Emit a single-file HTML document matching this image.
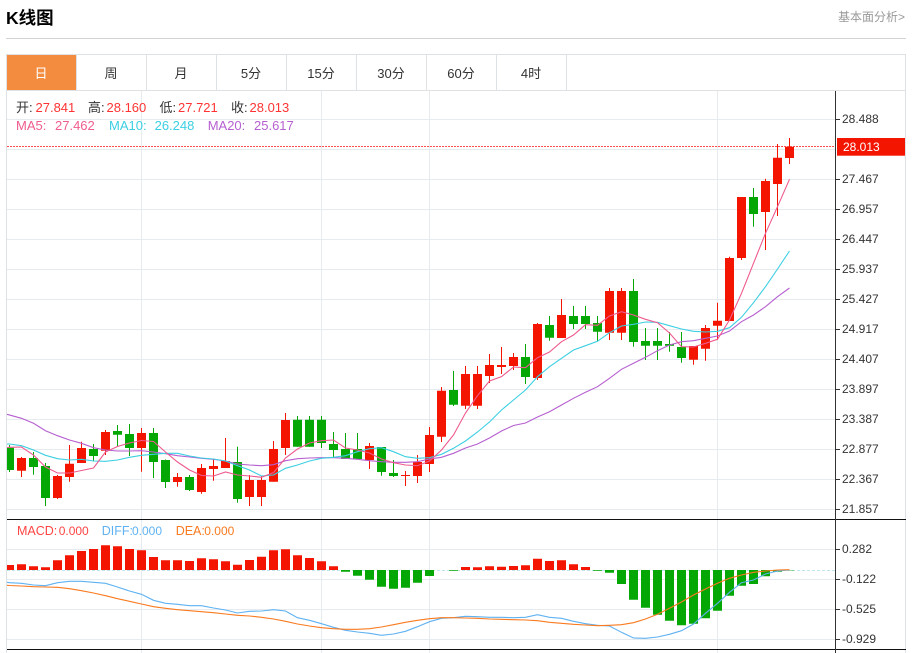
<!DOCTYPE html>
<html><head><meta charset="utf-8"><title>K线图</title>
<style>
html,body{margin:0;padding:0;background:#fff;overflow:hidden}
svg{display:block}
text{font-family:"Liberation Sans","Noto Sans CJK SC",sans-serif}
</style></head><body>
<svg xmlns="http://www.w3.org/2000/svg" width="913" height="653" viewBox="0 0 913 653">
<rect width="913" height="653" fill="#fff"/>
<text x="6" y="24" font-size="17.5" font-weight="700" fill="#000">K线图</text>
<text x="838" y="21" font-size="12" fill="#999">基本面分析&gt;</text>
<path d="M6 38.5H906" stroke="#d2d2d2" fill="none"/>
<!-- tabs -->
<rect x="7" y="55" width="69.5" height="35" fill="#f48c40"/>
<path d="M6 54.5H906M6 90.5H906M6.5 54V653M76.5 55V90M146.5 55V90M216.5 55V90M286.5 55V90M356.5 55V90M426.5 55V90M496.5 55V90M566.5 55V90M905.5 54V653" stroke="#dfe2e4" fill="none"/>
<g font-size="13" fill="#333" text-anchor="middle">
<text x="41" y="78" fill="#fff">日</text><text x="111" y="78">周</text><text x="181" y="78">月</text><text x="251" y="78">5分</text><text x="321" y="78">15分</text><text x="391" y="78">30分</text><text x="461" y="78">60分</text><text x="531" y="78">4时</text>
</g>
<!-- grid -->
<path d="M7 119.5H835M7 149.5H835M7 179.5H835M7 209.5H835M7 239.5H835M7 269.5H835M7 299.5H835M7 329.5H835M7 359.5H835M7 389.5H835M7 419.5H835M7 449.5H835M7 479.5H835M7 509.5H835M7 549.5H835M7 579.5H835M7 609.5H835M7 639.5H835M141.5 91V653M321.5 91V653M429.5 91V653M717.5 91V653" stroke="#e6ebf0" fill="none"/>
<!-- candles wicks -->
<path fill="none" stroke="#f41500" d="M21.5 457V477M57.5 475V499M69.5 445V481.7M81.5 441.7V463M105.5 430V455M141.5 428V471.7M177.5 473V486.7M201.5 464V493.7M213.5 459V480.7M225.5 438V468M249.5 475V506M261.5 476V506M273.5 441V481.7M285.5 413V455M369.5 443V469M405.5 471V486M417.5 455V483M429.5 427V472M441.5 387V442M465.5 366V409M477.5 366V409M489.5 354V383M501.5 347V374M513.5 353V370M537.5 323V380M561.5 299V338M609.5 288V340M621.5 288V340M693.5 346V364.7M705.5 325V360.7M717.5 302.7V340M729.5 256.7V321M741.5 197V260M765.5 178.7V250M777.5 144V216M789.5 138V164"/>
<path fill="none" stroke="#05a705" d="M9.5 445V472M33.5 452V474.7M45.5 463V506M93.5 444V461M117.5 425V446M129.5 424V456M153.5 428V478M165.5 459.5V488M189.5 475V491M237.5 446.7V502.7M297.5 416V446.7M309.5 416V446.7M321.5 416V448M333.5 432V457M345.5 433V459M357.5 433V459M381.5 447V475.7M393.5 460V477M453.5 371V406M525.5 344V384M549.5 316V340.7M573.5 306V329M585.5 306V329M597.5 316V341M633.5 279V346.7M645.5 328V360M657.5 328V360M669.5 332V351.7M681.5 332V362.7M753.5 188V226.7"/>
<!-- candle bodies -->
<path fill="#f41500" d="M17 458h9V470.7h-9zM53 476h9V498h-9zM65 463.7h9V477h-9zM77 448h9V463h-9zM101 432h9V450.7h-9zM137 433h9V448h-9zM173 477h9V482h-9zM197 468h9V492h-9zM209 466h9V469h-9zM221 461h9V468h-9zM245 480h9V497h-9zM257 480h9V497h-9zM269 449h9V481.7h-9zM281 420h9V448h-9zM365 446h9V460h-9zM401 475h9V476h-9zM413 462h9V476h-9zM425 435h9V464h-9zM437 390.7h9V436.7h-9zM461 374h9V405.7h-9zM473 374h9V405.7h-9zM485 365h9V376h-9zM497 365h9V367h-9zM509 357h9V366h-9zM533 324h9V378h-9zM557 315h9V338h-9zM605 291h9V332.7h-9zM617 291h9V332.7h-9zM689 346h9V359.7h-9zM701 328h9V348.7h-9zM713 320.7h9V325.7h-9zM725 258h9V321h-9zM737 197h9V258h-9zM761 181h9V212h-9zM773 157.7h9V184h-9zM785 146.7h9V158h-9z"/>
<path fill="#05a705" d="M7 447.7h7V470h-7zM29 458h9V467h-9zM41 466h9V498h-9zM89 449h9V456h-9zM113 431h9V434.7h-9zM125 434h9V448h-9zM149 433h9V462h-9zM161 460h9V482h-9zM185 477h9V490h-9zM233 462h9V499h-9zM293 419.7h9V446.7h-9zM305 419.7h9V446.7h-9zM317 419.7h9V443h-9zM329 444h9V450h-9zM341 449h9V459h-9zM353 449h9V459h-9zM377 447h9V472h-9zM389 473h9V476h-9zM449 390h9V404.7h-9zM521 357h9V377h-9zM545 325h9V337.7h-9zM569 316h9V324h-9zM581 316h9V324h-9zM593 323h9V331.7h-9zM629 291h9V342h-9zM641 341h9V345.7h-9zM653 341h9V345.7h-9zM665 344h9V345.7h-9zM677 347h9V358h-9zM749 197h9V214h-9z"/>
<!-- MA lines -->
<polyline fill="none" stroke="#b65fd0" stroke-width="1.1" points="7,414.3 21.5,418.3 33.5,423.3 45.5,430.7 57.5,435.7 69.5,440 81.5,443.3 93.5,447.7 105.5,450 117.5,451 129.5,451 141.5,450.7 153.5,452 165.5,453.7 177.5,455.7 189.5,457 201.5,458.3 213.5,459.3 225.5,461 237.5,464 249.5,465 261.5,465.7 273.5,464.7 285.5,460.7 297.5,458.7 309.5,458 321.5,457.7 333.5,457.7 345.5,458.3 357.5,459.3 369.5,460.7 381.5,461.7 393.5,462.3 405.5,462.3 417.5,461.7 429.5,459 441.5,457.3 453.5,453.3 465.5,448 477.5,444 489.5,438 501.5,431 513.5,425.5 525.5,423 537.5,417 549.5,411.7 561.5,405 573.5,398.3 585.5,392.3 597.5,386.7 609.5,378.3 621.5,369.3 633.5,363.3 645.5,357.3 657.5,350.7 669.5,345 681.5,341.7 693.5,340.7 705.5,338.3 717.5,336 729.5,331 741.5,321.7 753.5,315 765.5,306.7 777.5,296.7 789.5,288"/>
<polyline fill="none" stroke="#3ccfe2" stroke-width="1.1" points="7,444 9.5,444 21.5,445.7 33.5,450 45.5,455.3 57.5,458.7 69.5,460 81.5,459.3 93.5,461 105.5,461.3 117.5,460 129.5,457.3 141.5,455.3 153.5,454.3 165.5,453.3 177.5,453.3 189.5,456 201.5,458 213.5,459 225.5,461 237.5,465.7 249.5,470 261.5,476 273.5,475 285.5,468.3 297.5,465 309.5,461 321.5,458.3 333.5,457.3 345.5,455.7 357.5,451.7 369.5,448.7 381.5,447.7 393.5,451.7 405.5,456.7 417.5,458.3 429.5,457.7 441.5,454.3 453.5,448.3 465.5,441 477.5,432 489.5,422 501.5,410 513.5,400 525.5,390 537.5,376.7 549.5,366.7 561.5,358.3 573.5,350 585.5,345.7 597.5,341.3 609.5,332.7 621.5,326 633.5,324.3 645.5,322 657.5,322.3 669.5,325.7 681.5,329 693.5,331.3 705.5,332 717.5,331.3 729.5,327.7 741.5,317.3 753.5,302.7 765.5,286.7 777.5,269 789.5,251"/>
<polyline fill="none" stroke="#ee5a8e" stroke-width="1.1" points="7,447.5 9.5,447.3 21.5,447 33.5,455 45.5,467 57.5,473 69.5,473 81.5,470.5 93.5,468 105.5,452 117.5,446.5 129.5,443 141.5,440.5 153.5,441.5 165.5,452 177.5,462 189.5,470 201.5,475.5 213.5,476 225.5,472 237.5,475 249.5,476 261.5,477.3 273.5,472.7 285.5,458 297.5,449 309.5,443 321.5,440.7 333.5,440 345.5,448 357.5,450 369.5,453 381.5,459 393.5,462.7 405.5,465 417.5,465.7 429.5,461 441.5,450 453.5,435 465.5,413 477.5,395.7 489.5,381 501.5,376.7 513.5,367 525.5,367.7 537.5,357.7 549.5,352 561.5,341.7 573.5,335 585.5,324.7 597.5,325.3 609.5,316 621.5,311.7 633.5,315 645.5,319.3 657.5,322.7 669.5,333 681.5,346.7 693.5,347 705.5,343.3 717.5,339.3 729.5,320 741.5,293.3 753.5,263.3 765.5,233.3 777.5,206.7 789.5,179.3"/>
<!-- last price -->
<path d="M7 146.5H835" stroke="#ff4d4d" stroke-dasharray="2 1" fill="none"/>
<rect x="837" y="138" width="68" height="17.7" fill="#f41500"/>
<text x="843" y="151" font-size="12" fill="#fff">28.013</text>
<!-- MACD zero line -->
<path d="M7 570.5H835" stroke="#bfe6ee" stroke-dasharray="3 2" fill="none"/>
<!-- MACD bars -->
<path fill="#f41500" d="M7 565h7V570h-7zM17 564.3h9V570h-9zM29 566.3h9V570h-9zM41 567.3h9V570h-9zM53 560.3h9V570h-9zM65 555.3h9V570h-9zM77 551h9V570h-9zM89 549h9V570h-9zM101 545.3h9V570h-9zM113 546.3h9V570h-9zM125 549h9V570h-9zM137 550.3h9V570h-9zM149 557h9V570h-9zM161 560.3h9V570h-9zM173 560.3h9V570h-9zM185 561h9V570h-9zM197 558.3h9V570h-9zM209 559.3h9V570h-9zM221 561.3h9V570h-9zM233 564.7h9V570h-9zM245 560h9V570h-9zM257 556.7h9V570h-9zM269 550.3h9V570h-9zM281 549.3h9V570h-9zM293 555.3h9V570h-9zM305 558h9V570h-9zM317 561.3h9V570h-9zM329 566.3h9V570h-9zM461 567h9V570h-9zM473 567.3h9V570h-9zM485 566.3h9V570h-9zM497 566.7h9V570h-9zM509 566h9V570h-9zM521 565.3h9V570h-9zM533 558.7h9V570h-9zM545 561h9V570h-9zM557 560.3h9V570h-9zM569 564.3h9V570h-9zM581 567h9V570h-9z"/>
<path fill="#05a705" d="M341 570h9V571.7h-9zM353 570h9V575.7h-9zM365 570h9V579.7h-9zM377 570h9V586.7h-9zM389 570h9V588.7h-9zM401 570h9V587.7h-9zM413 570h9V582.7h-9zM425 570h9V576h-9zM449 570h9V570.7h-9zM593 570h9V570.7h-9zM605 570h9V572.7h-9zM617 570h9V584h-9zM629 570h9V599.7h-9zM641 570h9V607.7h-9zM653 570h9V614.7h-9zM665 570h9V620.7h-9zM677 570h9V625.3h-9zM689 570h9V623.7h-9zM701 570h9V618.3h-9zM713 570h9V610.7h-9zM725 570h9V595.7h-9zM737 570h9V585.7h-9zM749 570h9V584h-9zM761 570h9V576.3h-9zM773 570h9V571.7h-9zM785 570h9V570.4h-9z"/>
<!-- DIFF / DEA -->
<polyline fill="none" stroke="#5fb2f2" stroke-width="1.1" points="7,582.3 9.5,582.7 21.5,583.3 33.5,585 45.5,585.7 57.5,582.7 69.5,581.3 81.5,581.3 93.5,582.3 105.5,583.3 117.5,587 129.5,591 141.5,594.3 153.5,600.3 165.5,603.3 177.5,604.3 189.5,605.7 201.5,605.7 213.5,608 225.5,610 237.5,613 249.5,611.3 261.5,611 273.5,609.7 285.5,611 297.5,617.7 309.5,620.3 321.5,623.7 333.5,627.3 345.5,630.3 357.5,632 369.5,633.3 381.5,635.3 393.5,634 405.5,631.3 417.5,626.7 429.5,621.7 441.5,618.3 453.5,617.7 465.5,616.3 477.5,616.7 489.5,617.3 501.5,617.3 513.5,617.7 525.5,617.3 537.5,614.7 549.5,617.3 561.5,618.3 573.5,621.3 585.5,623.7 597.5,625.3 609.5,626 621.5,632.3 633.5,638 645.5,638.3 657.5,637 669.5,634.3 681.5,630.7 693.5,624 705.5,613.3 717.5,603.3 729.5,592.3 741.5,582.7 753.5,580 765.5,574 777.5,571 789.5,570"/>
<polyline fill="none" stroke="#f97a1f" stroke-width="1.1" points="7,585.3 9.5,585.5 21.5,586 33.5,586.7 45.5,587 57.5,587.3 69.5,588.7 81.5,590.7 93.5,593 105.5,595.7 117.5,598.7 129.5,601.3 141.5,604 153.5,606.7 165.5,608.3 177.5,609.7 189.5,610.7 201.5,611.7 213.5,612.7 225.5,614 237.5,615.3 249.5,616 261.5,617.3 273.5,619 285.5,621.3 297.5,624 309.5,626 321.5,627.7 333.5,628.7 345.5,629.3 357.5,629.3 369.5,628.7 381.5,627 393.5,624.7 405.5,622.3 417.5,620.3 429.5,618.7 441.5,617.7 453.5,617.7 465.5,618 477.5,618.3 489.5,619 501.5,619.3 513.5,619.7 525.5,620 537.5,620.7 549.5,622.3 561.5,623.3 573.5,624.3 585.5,625 597.5,625.7 609.5,625.3 621.5,624.7 633.5,622.7 645.5,619 657.5,614.3 669.5,608.3 681.5,602 693.5,595 705.5,589 717.5,583.3 729.5,578.3 741.5,575 753.5,572.3 765.5,571 777.5,570 789.5,569.7"/>
<!-- axes -->
<path d="M7 519.5H906M7 649.5H906" stroke="#111" fill="none"/>
<path d="M835.5 91V653M835 119.5h5M835 179.5h5M835 209.5h5M835 239.5h5M835 269.5h5M835 299.5h5M835 329.5h5M835 359.5h5M835 389.5h5M835 419.5h5M835 449.5h5M835 479.5h5M835 509.5h5M835 549.5h5M835 579.5h5M835 609.5h5M835 639.5h5" stroke="#333" fill="none"/>
<g font-size="12" fill="#333">
<text x="842" y="123">28.488</text><text x="842" y="183">27.467</text><text x="842" y="213">26.957</text><text x="842" y="243">26.447</text><text x="842" y="273">25.937</text><text x="842" y="303">25.427</text><text x="842" y="333">24.917</text><text x="842" y="363">24.407</text><text x="842" y="393">23.897</text><text x="842" y="423">23.387</text><text x="842" y="453">22.877</text><text x="842" y="483">22.367</text><text x="842" y="513">21.857</text>
<text x="842" y="553">0.282</text><text x="842" y="583">-0.122</text><text x="842" y="613">-0.525</text><text x="842" y="643">-0.929</text>
</g>
<!-- info -->
<g font-size="13">
<text x="16" y="112" fill="#333">开:</text><text x="35.5" y="112" fill="#f33">27.841</text>
<text x="88" y="112" fill="#333">高:</text><text x="106.5" y="112" fill="#f33">28.160</text>
<text x="159.5" y="112" fill="#333">低:</text><text x="178" y="112" fill="#f33">27.721</text>
<text x="231" y="112" fill="#333">收:</text><text x="249.5" y="112" fill="#f33">28.013</text>
<text x="16" y="130" fill="#ef5c8f">MA5:</text><text x="55" y="130" fill="#ef5c8f">27.462</text>
<text x="109" y="130" fill="#3ccfe2">MA10:</text><text x="154.6" y="130" fill="#3ccfe2">26.248</text>
<text x="207.7" y="130" fill="#b65fd0">MA20:</text><text x="254" y="130" fill="#b65fd0">25.617</text>
</g>
<g font-size="12.5">
<text x="17" y="535" fill="#f44">MACD:</text><text x="101.7" y="535" fill="#5fb2f2">DIFF:</text><text x="175.7" y="535" fill="#f97a1f">DEA:</text>
</g>
<g font-size="12">
<text x="58.7" y="535" fill="#f44">0.000</text><text x="132" y="535" fill="#5fb2f2">0.000</text><text x="204.3" y="535" fill="#f97a1f">0.000</text>
</g>
</svg>
</body></html>
